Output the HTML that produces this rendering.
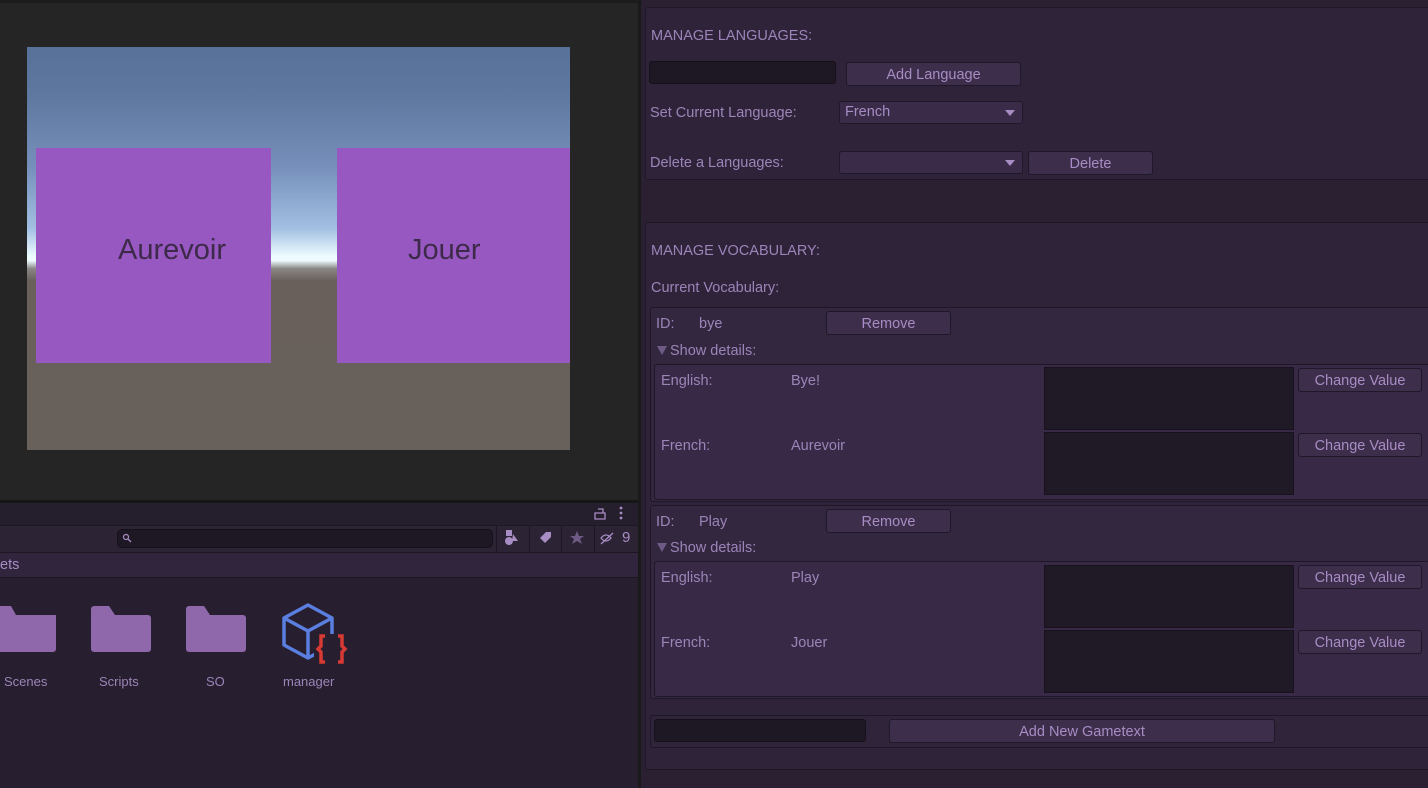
<!DOCTYPE html>
<html><head><meta charset="utf-8"><style>
*{margin:0;padding:0;box-sizing:border-box}
body{width:1428px;height:788px;overflow:hidden;background:#2a2032;font-family:"Liberation Sans","DejaVu Sans",sans-serif;font-size:14.5px;color:#9c84b8;position:relative}
.a{position:absolute}
.t{position:absolute;white-space:nowrap;line-height:18px}
.box{position:absolute;background:#2f233a;border:1px solid #1e1727;border-radius:3px}
.btn{position:absolute;background:#3d2e4b;border:1px solid #1f1828;border-radius:3px;text-align:center;line-height:25px;color:#a88cc4}
.inp{position:absolute;background:#1e1824;border:1px solid #15111a;border-radius:3px}
.dd{position:absolute;background:#3a2c48;border:1px solid #1f1828;border-radius:3px;line-height:20px;padding-left:5px;color:#a88cc4}
.dd:after{content:"";position:absolute;right:7px;top:8px;border-left:5px solid transparent;border-right:5px solid transparent;border-top:6px solid #a88cc4}
.ent{position:absolute;background:#33273f;border:1px solid #1e1727;border-radius:3px}
.det{position:absolute;background:#382a46;border:1px solid #1e1727;border-radius:3px}
.ta{position:absolute;background:#1f1a25;border:1px solid #17121c}
.tri{display:inline-block;width:0;height:0;border-left:5px solid transparent;border-right:5px solid transparent;border-top:9px solid #6e5a84;margin-right:3px;vertical-align:0}
</style></head><body>
<div class="a" style="left:0;top:0;width:638px;height:500px;background:#252525"></div>
<div class="a" style="left:0;top:0;width:638px;height:3px;background:#1c1c1c"></div>
<div class="a" style="left:27px;top:47px;width:543px;height:403px;background:linear-gradient(to bottom,#587198 0%,#5e78a0 12%,#7690bb 30%,#a2bfe2 45%,#eefcff 52%,#eefbff 53%,#8a8785 55%,#69605b 58%,#68605b 100%)"></div>
<div class="a" style="left:36px;top:148px;width:235px;height:215px;background:#9758c1"></div>
<div class="a" style="left:337px;top:148px;width:233px;height:215px;background:#9758c1"></div>
<div class="t" style="left:118px;top:235px;font-size:29px;line-height:30px;color:#3d2a4a">Aurevoir</div>
<div class="t" style="left:408px;top:235px;font-size:29px;line-height:30px;color:#3d2a4a">Jouer</div>
<div class="a" style="left:638px;top:0;width:3px;height:788px;background:#1a1a1a"></div>
<div class="a" style="left:0;top:500px;width:638px;height:3px;background:#161616"></div>
<div class="a" style="left:0;top:503px;width:638px;height:22px;background:#251e2c"></div>
<svg class="a" style="left:592px;top:505px" width="36" height="16"><path d="M3 8h10v6H3z M11 8V4H6" fill="none" stroke="#a88cc4" stroke-width="1.3"/><circle cx="29" cy="3" r="1.4" fill="#a88cc4"/><circle cx="29" cy="8" r="1.4" fill="#a88cc4"/><circle cx="29" cy="13" r="1.4" fill="#a88cc4"/></svg>
<div class="a" style="left:0;top:525px;width:638px;height:27px;background:#2c2335;border-top:1px solid #1d1724"></div>
<div class="inp" style="left:117px;top:529px;width:376px;height:19px;border-radius:5px"></div>
<svg class="a" style="left:122px;top:533px" width="10" height="10"><circle cx="4" cy="4" r="2.5" fill="none" stroke="#a88cc4" stroke-width="1.2"/><path d="M6 6l3 3" stroke="#a88cc4" stroke-width="1.3"/></svg>
<div class="a" style="left:496px;top:525px;width:1px;height:27px;background:#1d1724"></div>
<div class="a" style="left:529px;top:525px;width:1px;height:27px;background:#1d1724"></div>
<div class="a" style="left:561px;top:525px;width:1px;height:27px;background:#1d1724"></div>
<div class="a" style="left:594px;top:525px;width:1px;height:27px;background:#1d1724"></div>
<svg class="a" style="left:503px;top:529px" width="120" height="20"><rect x="3" y="1" width="6" height="6" fill="#a88cc4"/><circle cx="6" cy="12" r="4" fill="#a88cc4"/><path d="M10 5l5 7h-6z" fill="#a88cc4"/><path d="M37 9l6-6h5v5l-6 6z" fill="#a88cc4"/><path d="M74 2l2 5h5l-4 3 2 5-5-3-5 3 2-5-4-3h5z" fill="#6e5a84"/><path d="M98 9q5-6 10 0q-5 6-10 0z M98 15l12-11" fill="none" stroke="#a88cc4" stroke-width="1.3"/></svg>
<div class="t" style="left:622px;top:529px;color:#a88cc4;font-size:15px">9</div>
<div class="a" style="left:0;top:552px;width:638px;height:26px;background:#31253d;border-top:1px solid #1d1724;border-bottom:1px solid #1d1724"></div>
<div class="t" style="left:0;top:556px;color:#a88cc4">ets</div>
<div class="a" style="left:0;top:578px;width:638px;height:210px;background:#271f2f"></div>
<svg class="a" style="left:0;top:600px" width="360" height="70">
<g fill="#8e68aa"><path d="M-5 6h16l5 9h40v34a3 3 0 0 1-3 3H-5z"/><path d="M94 6h15l6 9h33a3 3 0 0 1 3 3v31a3 3 0 0 1-3 3H94a3 3 0 0 1-3-3V9a3 3 0 0 1 3-3z"/><path d="M189 6h15l6 9h33a3 3 0 0 1 3 3v31a3 3 0 0 1-3 3h-54a3 3 0 0 1-3-3V9a3 3 0 0 1 3-3z"/></g>
<path d="M284 18l24-13 24 13v27l-24 13-24-13z M284 18l24 13 24-13 M308 31v27" fill="none" stroke="#5a7fe0" stroke-width="3.5" stroke-linejoin="round"/>
<rect x="314" y="34" width="38" height="32" fill="#271f2f"/>
<path d="M325 36h-4v10l-3 3 3 3v10h4 M338 36h4v10l3 3-3 3v10h-4" fill="none" stroke="#d63a32" stroke-width="3.5"/>
</svg>
<div class="t" style="left:4px;top:673px;font-size:13px">Scenes</div>
<div class="t" style="left:99px;top:673px;font-size:13px">Scripts</div>
<div class="t" style="left:206px;top:673px;font-size:13px">SO</div>
<div class="t" style="left:283px;top:673px;font-size:13px">manager</div>

<div class="box" style="left:645px;top:7px;width:790px;height:173px"></div>
<div class="t" style="left:651px;top:27px">MANAGE LANGUAGES:</div>
<div class="inp" style="left:649px;top:61px;width:187px;height:23px"></div>
<div class="btn" style="left:846px;top:62px;width:175px;height:24px">Add Language</div>
<div class="t" style="left:650px;top:104px">Set Current Language:</div>
<div class="dd" style="left:839px;top:101px;width:184px;height:23px">French</div>
<div class="t" style="left:650px;top:154px">Delete a Languages:</div>
<div class="dd" style="left:839px;top:151px;width:184px;height:23px"></div>
<div class="btn" style="left:1028px;top:151px;width:125px;height:24px">Delete</div>

<div class="box" style="left:645px;top:222px;width:790px;height:548px"></div>
<div class="t" style="left:651px;top:242px">MANAGE VOCABULARY:</div>
<div class="t" style="left:651px;top:279px">Current Vocabulary:</div>

<div class="ent" style="left:650px;top:307px;width:790px;height:195px"></div>
<div class="t" style="left:656px;top:315px">ID:</div>
<div class="t" style="left:699px;top:315px">bye</div>
<div class="btn" style="left:826px;top:311px;width:125px;height:24px">Remove</div>
<div class="t" style="left:657px;top:342px"><span class="tri"></span>Show details:</div>
<div class="det" style="left:654px;top:364px;width:790px;height:136px"></div>
<div class="t" style="left:661px;top:372px">English:</div>
<div class="t" style="left:791px;top:372px">Bye!</div>
<div class="ta" style="left:1044px;top:367px;width:250px;height:63px"></div>
<div class="btn" style="left:1298px;top:368px;width:124px;height:24px">Change Value</div>
<div class="t" style="left:661px;top:437px">French:</div>
<div class="t" style="left:791px;top:437px">Aurevoir</div>
<div class="ta" style="left:1044px;top:432px;width:250px;height:63px"></div>
<div class="btn" style="left:1298px;top:433px;width:124px;height:24px">Change Value</div>

<div class="ent" style="left:650px;top:505px;width:790px;height:194px"></div>
<div class="t" style="left:656px;top:513px">ID:</div>
<div class="t" style="left:699px;top:513px">Play</div>
<div class="btn" style="left:826px;top:509px;width:125px;height:24px">Remove</div>
<div class="t" style="left:657px;top:539px"><span class="tri"></span>Show details:</div>
<div class="det" style="left:654px;top:561px;width:790px;height:136px"></div>
<div class="t" style="left:661px;top:569px">English:</div>
<div class="t" style="left:791px;top:569px">Play</div>
<div class="ta" style="left:1044px;top:565px;width:250px;height:63px"></div>
<div class="btn" style="left:1298px;top:565px;width:124px;height:24px">Change Value</div>
<div class="t" style="left:661px;top:634px">French:</div>
<div class="t" style="left:791px;top:634px">Jouer</div>
<div class="ta" style="left:1044px;top:630px;width:250px;height:63px"></div>
<div class="btn" style="left:1298px;top:630px;width:124px;height:24px">Change Value</div>

<div class="ent" style="left:650px;top:715px;width:790px;height:33px;background:#30243b"></div>
<div class="inp" style="left:654px;top:719px;width:212px;height:23px"></div>
<div class="btn" style="left:889px;top:719px;width:386px;height:24px">Add New Gametext</div>
</body></html>
